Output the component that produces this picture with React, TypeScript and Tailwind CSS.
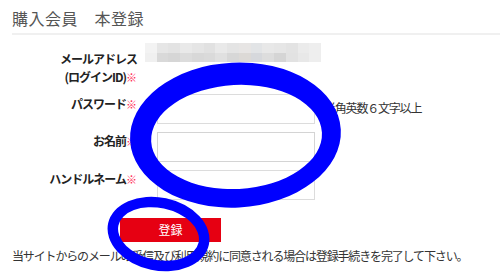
import React from "react";

const topCells = [
  "bg-[#f3f3f3]",
  "bg-[#e6e6e6]",
  "bg-[#e3e3e3]",
  "bg-[#e9e9e9]",
  "bg-[#e5e5e5]",
  "bg-[#e1e1e1]",
  "bg-[#e9e9e9]",
  "bg-[#e4e4e4]",
  "bg-[#e7e5e4]",
  "bg-[#e2e4e6]",
  "bg-[#e8e8e8]",
  "bg-[#e6e6e6]",
  "bg-[#e3e3e3]",
  "bg-[#ebebeb]",
  "bg-[#eeeeee]",
];
const bottomCells = [
  "bg-[#f0f0f0]",
  "bg-[#d9d9d9]",
  "bg-[#d6d6d6]",
  "bg-[#dcdcdc]",
  "bg-[#d8d8d8]",
  "bg-[#dadada]",
  "bg-[#e0e0e0]",
  "bg-[#d7d7d7]",
  "bg-[#dcd9d6]",
  "bg-[#d6d8dc]",
  "bg-[#dddddd]",
  "bg-[#d5d5d5]",
  "bg-[#e2e2e2]",
  "bg-[#e8e8e8]",
  "bg-[#eeeeee]",
];

function Req() {
  return <span className="text-[#ff2a55] font-normal text-[11px] tracking-[0px]">※</span>;
}

export default function App() {
  const font = { fontFamily: '"Noto Sans CJK JP", "Noto Sans", sans-serif' };
  return (
    <div
      className="relative w-[500px] h-[277px] overflow-hidden bg-white text-[#333]"
      style={font}
    >
      <div className="px-3 pt-[6px]">
        <h1 className="text-[16px] leading-[24px] text-[#555] font-normal tracking-[0.5px]">
          購入会員　本登録
        </h1>
      </div>
      <div className="ml-3 mt-[3px] border-b-2 border-[#f0f0f0]" />

      <div className="pl-3 pt-[8px] flex flex-col gap-[8px]">
        {/* Email row */}
        <div className="flex">
          <div className="w-[125px] text-right pt-[7px] text-[12px] leading-[18px] font-bold text-[#222] tracking-[-1px]">
            <div>メールアドレス</div>
            <div>
              (ログインID)
              <Req />
            </div>
          </div>
          <div className="ml-[8px]">
            <div className="w-[176px] h-[19px] flex flex-col">
              <div className="flex h-[10px]">
                {topCells.map((c, i) => (
                  <div key={i} className={`flex-1 ${c}`} />
                ))}
              </div>
              <div className="flex h-[9px]">
                {bottomCells.map((c, i) => (
                  <div key={i} className={`flex-1 ${c}`} />
                ))}
              </div>
            </div>
          </div>
        </div>

        {/* Password */}
        <div className="flex items-start">
          <div className="w-[125px] text-right text-[12px] leading-[18px] font-bold text-[#222] tracking-[-1px] pt-[1px]">
            パスワード
            <Req />
          </div>
          <div className="ml-[20px] w-[158px] h-[30px] border border-[#dcdcdc] bg-white" />
          <div className="ml-[9px] pt-[5px] text-[12px] leading-[18px] text-[#333] tracking-[-1.2px]">
            半角英数６文字以上
          </div>
        </div>

        {/* Name */}
        <div className="flex items-start">
          <div className="w-[125px] text-right text-[12px] leading-[18px] font-bold text-[#222] tracking-[-1px]">
            お名前
            <Req />
          </div>
          <div className="ml-[20px] w-[158px] h-[30px] border border-[#d4d4d4] bg-white" />
        </div>

        {/* Handle */}
        <div className="flex items-start">
          <div className="w-[125px] text-right text-[12px] leading-[18px] font-bold text-[#222] tracking-[-1px]">
            ハンドルネーム
            <Req />
          </div>
          <div className="ml-[20px] w-[158px] h-[30px] border border-[#dcdcdc] bg-white" />
        </div>
      </div>

      <div className="pl-[120px] mt-[18px]">
        <button className="w-[101px] h-[24px] bg-[#e60012] text-white text-[12px] leading-[24px] flex items-center justify-center">
          登録
        </button>
      </div>

      <p className="px-3 mt-[5px] text-[12px] leading-[18px] text-[#333] tracking-[-1.15px] whitespace-nowrap">
        当サイトからのメールの受信及び利用規約に同意される場合は登録手続きを完了して下さい。
      </p>

      <svg
        className="absolute left-0 top-0 pointer-events-none"
        width="500"
        height="277"
        viewBox="0 0 500 277"
      >
        <g transform="rotate(-3 236 136)">
          <path
            fillRule="evenodd"
            fill="#0000ff"
            d="M130 135 a105.5 72.5 0 1 0 211 0 a105.5 72.5 0 1 0 -211 0 Z M151 137 a85.5 52 0 1 0 171 0 a85.5 52 0 1 0 -171 0 Z"
          />
        </g>
        <g transform="rotate(12 158.5 234)">
          <path
            fillRule="evenodd"
            fill="#0000ff"
            d="M107 234 a51.5 36.5 0 1 0 103 0 a51.5 36.5 0 1 0 -103 0 Z M117.5 234 a41 26 0 1 0 82 0 a41 26 0 1 0 -82 0 Z"
          />
        </g>
      </svg>
    </div>
  );
}
